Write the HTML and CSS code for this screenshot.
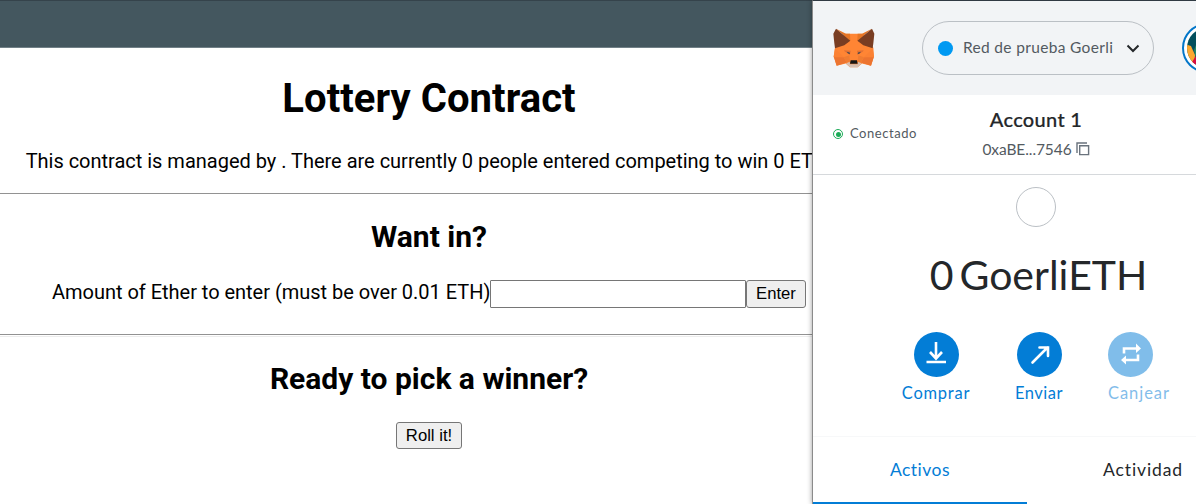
FILE: index.html
```
<!DOCTYPE html>
<html lang="es">
<head>
<meta charset="utf-8">
<title>Lottery Contract</title>
<link rel="stylesheet" href="styles.css">
</head>
<body>
<header class="topbar"></header>
<main class="page">
  <h1 class="title">Lottery Contract</h1>
  <p class="summary">This contract is managed by . There are currently 0 people entered competing to win 0 ETH!</p>
  <hr class="rule">
  <h2 class="heading">Want in?</h2>
  <form class="entry">
    <label class="entry-label" for="amount">Amount of Ether to enter (must be over 0.01 ETH)</label>
    <input class="entry-input" id="amount">
    <button class="button button-enter" type="button">Enter</button>
  </form>
  <hr class="rule rule-double">
  <h2 class="heading heading-last">Ready to pick a winner?</h2>
  <button class="button button-roll" type="button">Roll it!</button>
</main>
<aside class="wallet">
  <div class="wallet-bar">
    <svg class="fox" viewBox="71 84 126 119">
      <path fill="#ff8534" d="M106 101H160L192 143 194 168 185 197 158 190 145 201H122L109 190 82 197 73 168 77 143Z"/>
      <path fill="#e67525" d="M80 86 110 101H122L123 122ZM188 86 158 101H145L144 122Z"/>
      <path fill="#793d22" d="M80 86 123 122 105 135 77 144 75 129 72 101ZM188 86 144 122 162 135 190 144 192 129 195 101Z"/>
      <path fill="#ec7430" d="M73 169 103 171 112 187 82 197ZM194 169 164 171 155 187 185 197Z"/>
      <path fill="#fb8133" d="M77 144 103 171H73ZM190 144 164 171H194Z"/>
      <path fill="#e07035" d="M104 150 124 152 122 164 106 154ZM163 150 143 152 145 164 161 154Z"/>
      <path fill="#f07c31" d="M103 171 120 165 122 184 112 187ZM164 171 147 165 145 184 155 187Z"/>
      <path fill="#4a4a50" d="M112 155 121 157 122 162 116 160ZM155 155 146 157 145 162 151 160Z"/>
      <path fill="#d5bfb2" d="M110 190 121 185 122 192H145L146 185 157 190 145 201H122Z"/>
      <path fill="#161616" d="M124 180H143L145 191H122Z"/>
    </svg>
    <div class="network">
      <span class="network-dot"></span>
      <span class="network-name">Red de prueba Goerli</span>
      <svg class="chevron" viewBox="0 0 14 9"><path d="M1.5 1.5 7 7 12.5 1.5"/></svg>
    </div>
    <svg class="avatar" viewBox="0 0 50 50">
      <defs><clipPath id="face"><circle cx="25" cy="25" r="20"/></clipPath></defs>
      <circle cx="25" cy="25" r="24" fill="#fff" stroke="#0376c9" stroke-width="2"/>
      <g clip-path="url(#face)">
        <path fill="#034f5d" d="M0 0H50V50H0Z"/>
        <path fill="#238769" d="M16 17 12 27 15 40H30V17Z"/>
        <path fill="#fba72f" d="M3 21 9 23 13 32 12 45H0Z"/>
        <path fill="#d70b43" d="M14 33 10 39 16 48H30Z"/>
      </g>
    </svg>
  </div>
  <div class="account">
    <div class="connected"><span class="connected-dot"></span><span class="connected-text">Conectado</span></div>
    <div class="identity">
      <div class="account-name">Account 1</div>
      <div class="address"><span class="address-text">0xaBE...7546</span>
        <svg class="copy" viewBox="0 0 14 14"><path d="M1 11V1H11M3.7 3.7H12.6V12.6H3.7Z"/></svg>
      </div>
    </div>
  </div>
  <div class="overview">
    <div class="token"></div>
    <div class="balance"><span class="amount">0</span><span class="unit">GoerliETH</span></div>
    <div class="actions">
      <div class="action action-buy">
        <svg class="action-icon" viewBox="0 0 45 45"><circle cx="22.5" cy="22.5" r="22.5"/><path d="M22 10V26M16 20 22 26.5 28 20M12.5 30H32"/></svg>
        <span class="buy-text">Comprar</span>
      </div>
      <div class="action action-send">
        <svg class="action-icon" viewBox="0 0 45 45"><circle cx="22.5" cy="22.5" r="22.5"/><path stroke-linecap="round" d="M15.5 30.5 30.5 15.5M22.5 15.5H31V24"/></svg>
        <span class="send-text">Enviar</span>
      </div>
      <div class="action action-swap">
        <svg class="action-icon" viewBox="0 0 45 45"><circle cx="22.5" cy="22.5" r="22.5"/><path d="M16 21.5V16.5H29M30 22.5V28H17"/><path class="tip" d="M28 11.5 33 16.5 28 21ZM18 23.5 13 28 18 32.5Z"/></svg>
        <span class="swap-text">Canjear</span>
      </div>
    </div>
  </div>
  <div class="tabs">
    <div class="tab tab-active">Activos</div>
    <div class="tab tab-other">Actividad</div>
  </div>
</aside>
</body>
</html>
```
FILE: styles.css
```
* { box-sizing: border-box; }
body {
  margin: 0;
  height: 504px;
  position: relative;
  overflow: hidden;
  background: #fff;
  color: #000;
  font: 20px/24px Roboto, sans-serif;
}
.topbar {
  height: 48px;
  background: #44575f;
  border-top: 1px solid #35434b;
  border-bottom: 1px solid #718087;
}
.page {
  width: 858px;
  display: flex;
  flex-direction: column;
  align-items: center;
}
.title { margin: 27px 0 0; font-size: 40px; line-height: 48px; font-weight: 700; letter-spacing: .05px; }
.summary { margin: 26px 0 0; white-space: nowrap; letter-spacing: -.012px; }
.rule { width: 100%; height: 1px; margin: 20px 0 0; border: 0; background: #929292; }
.rule-double { height: 3px; margin-top: 26px; background: #fff; border-top: 1px solid #929292; border-bottom: 1px solid #ececec; }
.heading { margin: 25px 0 0; font-size: 30px; line-height: 36px; font-weight: 700; }
.heading-last { margin-top: 24px; }
.entry { display: flex; margin-top: 25px; height: 28px; white-space: nowrap; }
.entry-label { width: 438px; letter-spacing: -.02px; }
.entry-input { width: 256px; height: 28px; margin: 0; border: 1px solid #767676; border-radius: 1px; background: #fff; }
.button {
  height: 28px;
  margin: 0;
  padding: 0;
  border: 1px solid #767676;
  border-radius: 3px;
  background: #efefef;
  color: #000;
  font: 16.67px "Liberation Sans", Arial, sans-serif;
}
.button-enter { width: 60px; }
.button-roll { width: 66px; height: 27px; margin-top: 25px; }

.wallet {
  position: absolute;
  left: 812px;
  top: 0;
  width: 447px;
  height: 504px;
  display: flex;
  flex-direction: column;
  background: #fff;
  border-left: 1px solid #8b8b8b;
  border-top: 1px solid #303a43;
  box-shadow: 0 0 5px rgba(0, 0, 0, .4);
  color: #24272a;
  font-family: Lato, sans-serif;
  white-space: nowrap;
}
.wallet-bar { height: 94px; display: flex; align-items: center; padding-left: 20px; background: #f2f4f6; }
.fox { width: 42px; height: 40px; }
.network {
  width: 232px;
  height: 54px;
  margin-left: 47px;
  padding-left: 15px;
  display: flex;
  align-items: center;
  border: 1px solid #bbc0c5;
  border-radius: 27px;
  color: #535a61;
}
.network-dot { width: 15px; height: 15px; border-radius: 50%; background: #0099f2; }
.network-name { width: 150px; margin-left: 10px; padding-bottom: 2px; font-size: 15.5px; letter-spacing: .33px; }
.chevron { width: 14px; height: 9px; margin-left: 13px; fill: none; stroke: #24272a; stroke-width: 2; }
.avatar { width: 50px; height: 50px; margin-left: 28px; }
.account { height: 80px; display: flex; border-bottom: 1px solid #d6d9dc; }
.connected { width: 150px; height: 77px; padding-left: 20px; display: flex; align-items: center; color: #535a61; }
.connected-dot { width: 10px; height: 10px; border: 1px solid #1cab58; border-radius: 50%; padding: 1.5px; background: #1cab58 content-box; }
.connected-text { margin-left: 7px; padding-bottom: 2px; font-size: 13px; letter-spacing: .55px; }
.identity { width: 146px; display: flex; flex-direction: column; align-items: center; }
.account-name { margin-top: 12px; font-size: 20px; font-weight: 500; letter-spacing: .3px; -webkit-text-stroke: .2px #24272a; }
.address { margin-top: 6px; display: flex; align-items: center; color: #535a61; }
.address-text { font-size: 15.5px; letter-spacing: -.08px; }
.copy { width: 14px; height: 14px; margin-left: 4px; fill: none; stroke: #6a737d; stroke-width: 1.4; }
.overview { height: 262px; display: flex; flex-direction: column; align-items: center; border-bottom: 1px solid #f7f8f9; }
.token { width: 40px; height: 40px; margin-top: 12px; border: 1px solid #bbc0c5; border-radius: 50%; }
.balance { height: 50px; margin-top: 23px; padding-left: 5px; display: flex; font-size: 41px; line-height: 50px; }
.unit { margin-left: 6px; }
.actions { width: 100%; margin-top: 32px; display: flex; font-size: 16.5px; line-height: 20px; color: #037dd6; }
.action { display: flex; flex-direction: column; align-items: center; gap: 6px; }
.action-buy { width: 80px; margin-left: 83px; }
.action-send { width: 80px; margin-left: 23px; }
.action-swap { width: 80px; margin-left: 20px; opacity: .5; }
.action-icon { width: 45px; height: 45px; fill: none; stroke: #fff; stroke-width: 2.6; }
.action-icon circle { fill: #037dd6; stroke: none; }
.action-icon .tip { fill: #fff; stroke: none; }
.buy-text { letter-spacing: .75px; }
.send-text { letter-spacing: .5px; }
.swap-text { letter-spacing: .95px; }
.action-swap .action-icon,
.action-swap .swap-text { align-self: flex-start; margin-left: 9px; }
.tabs { height: 67px; display: flex; font-size: 17.5px; line-height: 66px; text-align: center; }
.tab-active { width: 214px; color: #037dd6; border-bottom: 2px solid #037dd6; letter-spacing: .5px; }
.tab-other { width: 232px; letter-spacing: .9px; }
```
